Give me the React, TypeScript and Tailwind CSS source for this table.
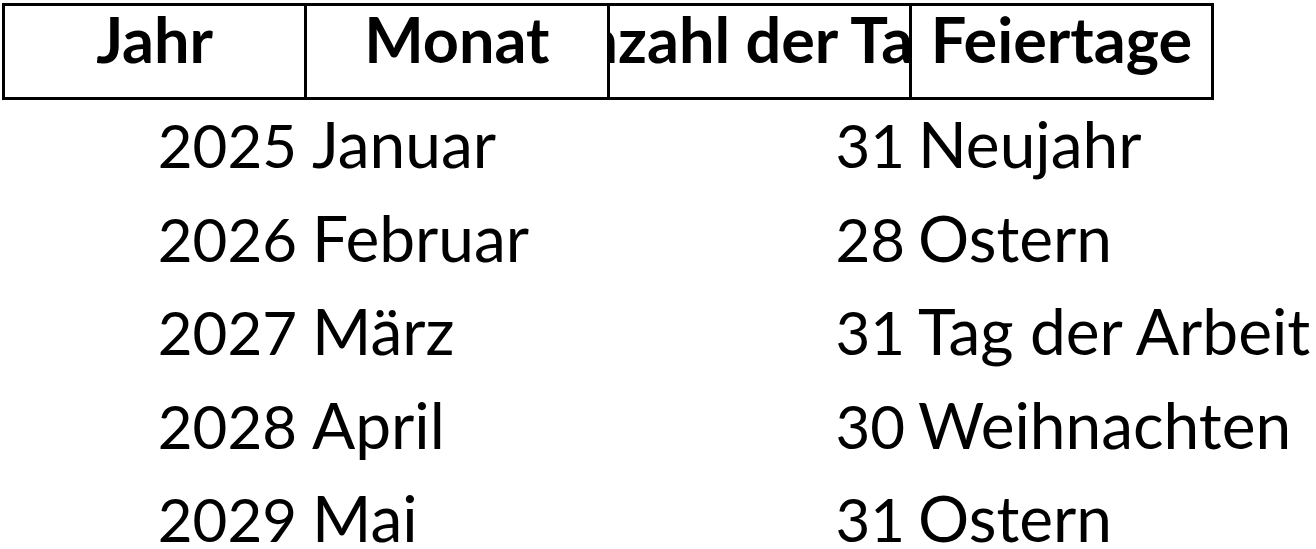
const rows = [
  { jahr: 2025, monat: "Januar", tage: 31, feiertag: "Neujahr" },
  { jahr: 2026, monat: "Februar", tage: 28, feiertag: "Ostern" },
  { jahr: 2027, monat: "März", tage: 31, feiertag: "Tag der Arbeit" },
  { jahr: 2028, monat: "April", tage: 30, feiertag: "Weihnachten" },
  { jahr: 2029, monat: "Mai", tage: 31, feiertag: "Ostern" },
];

const headers = ["Jahr", "Monat", "Anzahl der Tage", "Feiertage"];

export default function App() {
  return (
    <div className="h-[549px] w-[1316px] overflow-hidden bg-white pl-[2px] pt-[3px] font-['Lato',sans-serif] text-black">
      {/* Header */}
      <div className="flex w-[1212px] border-[3px] border-black">
        {headers.map((h, i) => (
          <div
            key={h}
            className={`flex h-[91px] items-start justify-center overflow-hidden whitespace-nowrap pt-[1px] text-[63px] font-bold leading-none ${
              i > 0 ? "w-[303px] border-l-[3px] border-black" : "w-[300px]"
            }`}
          >
            {h}
          </div>
        ))}
      </div>

      {/* Body */}
      {rows.map((r) => (
        <div key={r.jahr} className="flex h-[93.5px] items-baseline whitespace-nowrap pt-[12px] leading-none">
          <div className="w-[302px] pr-[7px] text-right text-[60px]">{r.jahr}</div>
          <div className="w-[303px] pl-[8px] text-[64px]">{r.monat}</div>
          <div className="w-[303px] pr-[5px] text-right text-[60px]">{r.tage}</div>
          <div className="pl-[8px] text-[64px]">{r.feiertag}</div>
        </div>
      ))}
    </div>
  );
}
